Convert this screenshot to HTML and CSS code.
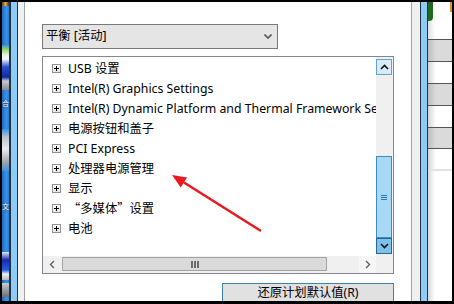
FILE: index.html
```html
<!DOCTYPE html>
<html lang="zh-CN">
<head>
    <meta charset="UTF-8">
    <meta name="viewport" content="width=device-width, initial-scale=1.0">
    <title>电源选项 - 高级设置</title>

    <link rel="stylesheet" href="styles.css">
</head>
<body>
<div class="screen">
    <div class="main-row">

        <!-- desktop strip behind the window -->
        <div class="desk">
            <div class="desk-icon top-icon"></div>
            <div class="desk-icon globe-icon"></div>
            <div class="desk-label">合</div>
            <div class="desk-icon disk-icon"></div>
            <div class="desk-label label-wen">文</div>
            <div class="desk-icon screen-icon"></div>
            <div class="desk-icon box-icon"></div>
        </div>
        <div class="frame-edge"></div>
        <div class="gutter"></div>

        <!-- power options dialog -->
        <div class="dialog">
            <div class="plan-select">
                <span>平衡 [活动]</span>
                <svg class="chevron" width="8" height="5" viewBox="0 0 8 5">
                    <polyline points="0.5,0.5 4,4 7.5,0.5" fill="none" stroke="#555" stroke-width="1.6"/>
                </svg>
            </div>

            <div class="settings-box">
                <div class="settings-top">
                    <ul class="tree">
                        <li><span class="expander"></span>USB 设置</li>
                        <li><span class="expander"></span>Intel(R) Graphics Settings</li>
                        <li><span class="expander"></span>Intel(R) Dynamic Platform and Thermal Framework Settings</li>
                        <li><span class="expander"></span>电源按钮和盖子</li>
                        <li><span class="expander"></span>PCI Express</li>
                        <li><span class="expander"></span>处理器电源管理</li>
                        <li><span class="expander"></span>显示</li>
                        <li><span class="expander"></span><span class="cjk">“多媒体”设置</span></li>
                        <li><span class="expander"></span>电池</li>
                    </ul>
                    <div class="vscroll">
                        <div class="vbtn vbtn-up">
                            <svg width="9" height="6" viewBox="0 0 9 6">
                                <polyline points="1,5 4.5,1.5 8,5" fill="none" stroke="#111" stroke-width="1.6"/>
                            </svg>
                        </div>
                        <div class="vtrack">
                            <div class="vthumb">
                                <span class="vgrip"></span>
                                <span class="vgrip"></span>
                                <span class="vgrip"></span>
                            </div>
                        </div>
                        <div class="vbtn vbtn-down">
                            <svg width="9" height="6" viewBox="0 0 9 6">
                                <polyline points="1,1 4.5,4.5 8,1" fill="none" stroke="#111" stroke-width="1.6"/>
                            </svg>
                        </div>
                    </div>
                </div>
                <div class="hscroll">
                    <div class="hbtn">
                        <svg width="6" height="9" viewBox="0 0 6 9">
                            <polyline points="5,1 1.5,4.5 5,8" fill="none" stroke="#606060" stroke-width="1.4"/>
                        </svg>
                    </div>
                    <div class="htrack">
                        <div class="hthumb">
                            <span class="hgrip"></span>
                            <span class="hgrip"></span>
                            <span class="hgrip"></span>
                        </div>
                    </div>
                    <div class="hbtn hbtn-right">
                        <svg width="6" height="9" viewBox="0 0 6 9">
                            <polyline points="1,1 4.5,4.5 1,8" fill="none" stroke="#606060" stroke-width="1.4"/>
                        </svg>
                    </div>
                    <div class="corner"></div>
                </div>
            </div>

            <button class="restore-btn" type="button">还原计划默认值(R)</button>

            <!-- red annotation arrow drawn over the list -->
            <svg class="pointer" width="386" height="299" viewBox="0 0 386 299">
                <line x1="236" y1="229" x2="159" y2="180.5" stroke="#e8191f" stroke-width="2.6"/>
                <polygon points="147,173 162.1,175.4 155.7,185.6" fill="#e8191f"/>
            </svg>
        </div>

        <div class="gutter-right"></div>
        <div class="frame-edge"></div>

        <!-- window behind, on the right -->
        <div class="side-panel">
            <div class="side-top">
                <span class="leaf"></span>
                <span class="spark"></span>
            </div>
            <div class="band band-gray"></div>
            <div class="band"></div>
            <div class="band band-gray"></div>
            <div class="band"></div>
            <div class="band band-gray band-short"></div>
            <div class="band band-last"></div>
            <div class="band-rest"></div>
        </div>
    </div>
</div>
</body>
</html>
```

FILE: styles.css
```css
* {
    box-sizing: border-box;
}

html, body {
    margin: 0;
    padding: 0;
}

body {
    background: #000;
    font-family: "Noto Sans", "Noto Sans CJK SC", sans-serif;
    font-size: 12.3px;
    color: #000;
}

.screen {
    width: 454px;
    height: 304px;
    padding: 2px 2px 3px 2px;
    background: #000;
    overflow: hidden;
}

.main-row {
    display: flex;
    height: 299px;
    overflow: hidden;
}

/* desktop strip */
.desk {
    width: 7px;
    flex: none;
    display: flex;
    flex-direction: column;
    overflow: hidden;
    background: linear-gradient(to right, #1a67c0, #3b93e4 60%, #2c80d8);
}

.desk-icon {
    flex: none;
}

.top-icon {
    height: 4px;
    background: linear-gradient(to right, #5a4a20, #d8b040, #3a3a3a);
}

.globe-icon {
    height: 45px;
    margin-top: 39px;
    background: linear-gradient(to bottom, #3b93e4 0, #8ccf6a 4px, #e8f4e0 10px, #f2f6ff 14px, #2a4fd0 22px, #0c2a9a 32px, #c8c8d0 36px, #8a8a90 45px);
}

.desk-label {
    height: 12px;
    margin-top: 7px;
    font-family: "Noto Sans CJK SC", sans-serif;
    font-size: 7px;
    line-height: 12px;
    color: #fff;
    text-shadow: 0 0 2px #000;
    white-space: nowrap;
}

.disk-icon {
    height: 42px;
    margin-top: 20px;
    background: linear-gradient(to bottom, #3b93e4, #b8c4d0 8px, #e8ecf0 20px, #9aa0a8 34px, #3b93e4);
}

.label-wen {
    margin-top: 29px;
}

.screen-icon {
    height: 28px;
    margin-top: 40px;
    background: linear-gradient(to bottom, #e0e8f0, #1a2ab0 8px, #2060e0 18px, #f0f0f0 22px, #b0b8c0 28px);
}

.box-icon {
    height: 14px;
    margin-top: 3px;
    background: linear-gradient(to bottom, #c8ccd0, #6a7078);
}

/* window frame pieces */
.frame-edge {
    width: 9px;
    flex: none;
    background: #8fccf5;
    border-left: 2px solid #22344a;
    border-right: 1px solid #22344a;
}

.gutter-right + .frame-edge {
    width: 8px;
    border-left-width: 1px;
}

.gutter {
    width: 7px;
    flex: none;
    background: #f0f0f0;
    border-right: 1px solid #a0a0a0;
}

.gutter-right {
    width: 9px;
    flex: none;
    background: #f0f0f0;
    border-left: 1px solid #a0a0a0;
}

/* dialog */
.dialog {
    position: relative;
    width: 386px;
    flex: none;
    background: #fff;
    padding: 22px 0 0 17px;
}

.plan-select {
    width: 236px;
    height: 25px;
    border: 1px solid #7a7a7a;
    background: #e5e5e5;
    display: flex;
    align-items: center;
    justify-content: space-between;
    padding: 0 5px 0 3px;
    line-height: 1;
}

.settings-box {
    margin-top: 7px;
    width: 352px;
    height: 218px;
    border: 1px solid #828790;
    display: flex;
    flex-direction: column;
}

.settings-top {
    display: flex;
    height: 199px;
}

.tree {
    flex: 1;
    margin: 0;
    padding: 1px 0 0 0;
    list-style: none;
    overflow: hidden;
}

.tree li {
    height: 20px;
    display: flex;
    align-items: center;
    padding-left: 9px;
    white-space: nowrap;
}

.cjk {
    font-family: "Noto Sans CJK SC", sans-serif;
}

.expander {
    position: relative;
    flex: none;
    width: 9px;
    height: 9px;
    margin-right: 7px;
    border: 1px solid #919191;
    background: linear-gradient(to bottom, #fff, #e4e4e4);
}

.expander::before,
.expander::after {
    content: "";
    position: absolute;
    background: #000;
}

.expander::before {
    left: 1px;
    top: 3px;
    width: 5px;
    height: 1px;
}

.expander::after {
    left: 3px;
    top: 1px;
    width: 1px;
    height: 5px;
}

/* vertical scrollbar */
.vscroll {
    width: 17px;
    flex: none;
    background: #f0f0f0;
    display: flex;
    flex-direction: column;
    padding: 2px 1px 2px 0;
}

.vbtn {
    height: 16px;
    flex: none;
    display: flex;
    align-items: center;
    justify-content: center;
    border: 1px solid #5da3d6;
    background: #d9ebfa;
}

.vbtn-down {
    border-color: #2c6690;
    background: #7cc3ec;
}

.vtrack {
    flex: 1;
    display: flex;
    flex-direction: column;
    justify-content: flex-end;
}

.vthumb {
    height: 82px;
    border: 1px solid #3b8cc6;
    background: #a7d9f5;
    display: flex;
    flex-direction: column;
    align-items: center;
    justify-content: center;
    gap: 1px;
}

.vgrip {
    width: 6px;
    height: 1px;
    background: #2c7ab8;
}

/* horizontal scrollbar */
.hscroll {
    height: 17px;
    display: flex;
    background: #f0f0f0;
}

.hbtn {
    width: 17px;
    flex: none;
    display: flex;
    align-items: center;
    justify-content: center;
}

.hbtn-right {
    background: #f6f6f6;
}

.htrack {
    flex: 1;
    padding: 1px 0 2px 2px;
}

.hthumb {
    width: 265px;
    height: 14px;
    border: 1px solid #a3a3a3;
    background: #dadada;
    display: flex;
    align-items: center;
    justify-content: center;
    gap: 1px;
}

.hgrip {
    width: 2px;
    height: 7px;
    background: #6b6b6b;
}

.corner {
    width: 17px;
    flex: none;
}

.restore-btn {
    display: block;
    margin: 9px 0 0 180px;
    width: 172px;
    height: 23px;
    padding: 0 0 3px 0;
    border: 1px solid #3c7fb1;
    background: #e1e1e1;
    font-family: inherit;
    font-size: 12.3px;
    line-height: 1;
    color: #000;
}

.pointer {
    position: absolute;
    left: 0;
    top: 0;
    pointer-events: none;
}

/* right hand window */
.side-panel {
    width: 24px;
    flex: none;
    background: #fff;
    display: flex;
    flex-direction: column;
}

.side-top {
    height: 37px;
    display: flex;
    justify-content: space-between;
    background: linear-gradient(to right, #dedede, #fff 7px);
}

.leaf {
    width: 5px;
    height: 19px;
    background: #1f6a1f;
    border-radius: 0 0 4px 0;
}

.spark {
    width: 2px;
    height: 10px;
    background: #e09030;
}

.band {
    height: 22px;
    border-top: 1px solid #555;
    background: linear-gradient(to right, #d4d4d4, #fff 8px);
}

.band-gray {
    background: linear-gradient(to right, #bdbdbd, #dadada 8px);
}

.band-short {
    height: 21px;
}

.band-last {
    height: 23px;
    border-bottom: 2px solid #e2e2e2;
}

.band-rest {
    flex: 1;
    background: linear-gradient(to right, #d8d8d8, #fff 7px);
}
```
